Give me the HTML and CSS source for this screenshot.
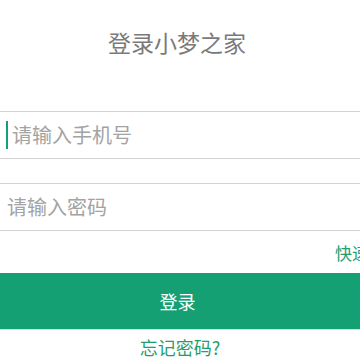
FILE: index.html
```html
<!DOCTYPE html>
<html>
<head>
  <meta charset="utf-8">
  <title>登录小梦之家</title>
  <link rel="stylesheet" href="styles.css">
</head>
<body>
  <div class="page">
    <div class="header">
      <h2>登录小梦之家</h2>
    </div>

    <div class="field field-active">
      <span class="cursor"></span>
      <span class="placeholder">请输入手机号</span>
    </div>

    <div class="field">
      <span class="placeholder">请输入密码</span>
    </div>

    <div class="quick">
      <a href="#">快速注册</a>
    </div>

    <button class="login-btn">登录</button>

    <div class="forgot">
      <a href="#">忘记密码?</a>
    </div>
  </div>
</body>
</html>
```

FILE: styles.css
```css
html, body {
  margin: 0;
  padding: 0;
  overflow: hidden;
}
body {
  font-family: "Noto Sans CJK SC", "Noto Sans", sans-serif;
  background-color: #ffffff;
  width: 360px;
  height: 360px;
}
.page {
  display: flex;
  flex-direction: column;
}
.header {
  height: 111px;
  display: flex;
  justify-content: center;
  padding-top: 27px;
  box-sizing: border-box;
}
.header h2 {
  margin: 0;
  font-size: 23px;
  font-weight: normal;
  color: #7a7a7a;
  line-height: 30px;
  margin-left: -6px;
}
.field {
  height: 48px;
  box-sizing: border-box;
  border-top: 1px solid #d2d2d2;
  border-bottom: 1px solid #d2d2d2;
  display: flex;
  align-items: center;
  gap: 4px;
  padding-left: 7px;
  margin-bottom: 24px;
}
.field-active {
  padding-left: 6px;
}
.cursor {
  width: 2px;
  height: 28px;
  background-color: #17a078;
}
.placeholder {
  font-size: 20px;
  color: #a3a3a3;
  line-height: 28px;
}
.quick {
  height: 42px;
  margin-top: -24px;
  display: flex;
  align-items: center;
  padding-left: 335px;
  white-space: nowrap;
}
.quick a, .forgot a {
  color: #1f9e70;
  text-decoration: none;
}
.quick a {
  font-size: 17px;
}
.login-btn {
  height: 57px;
  width: 100%;
  border: none;
  border-bottom: 1px solid #cfe3d9;
  background-color: #15a074;
  color: #ffffff;
  font-family: inherit;
  font-size: 18px;
  padding: 0 5px 0 0;
  cursor: pointer;
}
.forgot {
  display: flex;
  justify-content: center;
  padding-top: 4px;
}
.forgot a {
  font-size: 18px;
  line-height: 26px;
}
```
